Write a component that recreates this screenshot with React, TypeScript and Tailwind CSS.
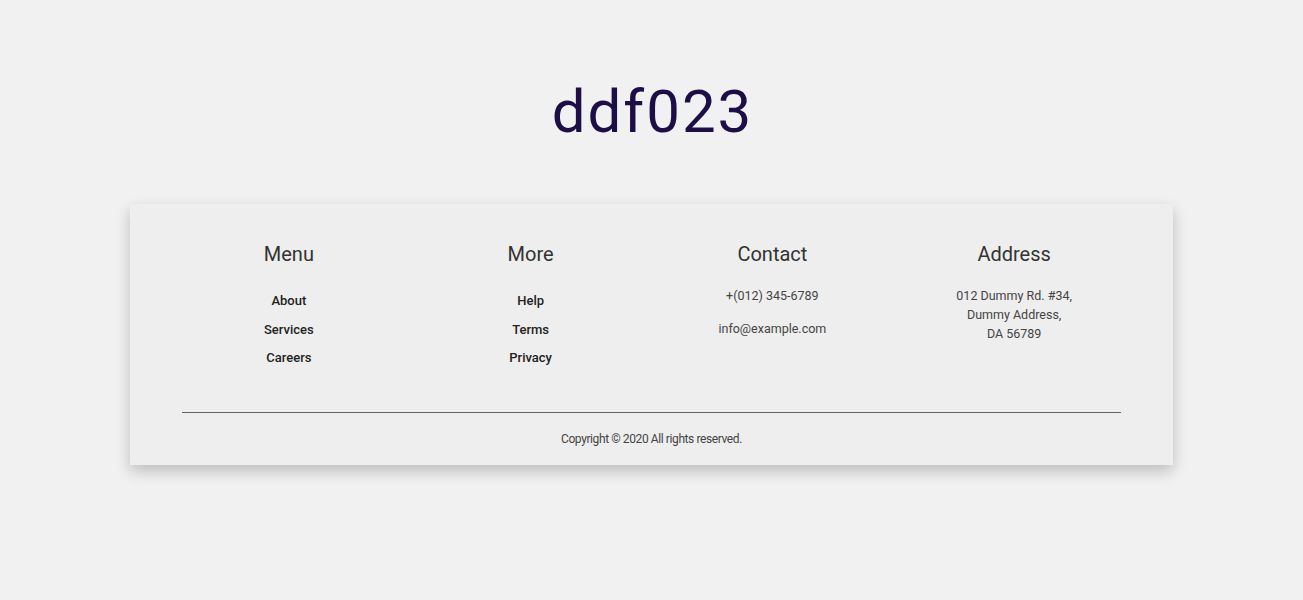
import React from "react";

const columns = [
  { title: "Menu", links: ["About", "Services", "Careers"] },
  { title: "More", links: ["Help", "Terms", "Privacy"] },
];

const App = () => {
  return (
    <div
      className="min-h-[600px] bg-[#f1f1f1] pt-[82px]"
      style={{ fontFamily: "Roboto, 'Noto Sans', sans-serif" }}
    >
      <h1 className="pl-[2px] text-center text-[60px] leading-none font-normal tracking-[2px] text-[#1e0e48]">ddf023</h1>

      <footer className="mx-auto mt-[62px] w-[1043px] bg-[#eeeeee] pt-[38px] pb-[18px] shadow-[0_6px_14px_rgba(0,0,0,0.22)]">
        <div className="grid grid-cols-4 px-[38px] text-center">
          {columns.map((col) => (
            <div key={col.title}>
              <h3 className="text-[20px] leading-6 text-[#333]">{col.title}</h3>
              <ul className="mt-[21px]">
                {col.links.map((l) => (
                  <li key={l} className="text-[13px] leading-[28.5px] font-medium text-[#222]">
                    {l}
                  </li>
                ))}
              </ul>
            </div>
          ))}
          <div>
            <h3 className="text-[20px] leading-6 text-[#333]">Contact</h3>
            <div className="mt-[19.5px] text-[12.5px] leading-[19px] text-[#444]">
              <p>+(012) 345-6789</p>
              <p className="mt-[14px]">info@example.com</p>
            </div>
          </div>
          <div>
            <h3 className="text-[20px] leading-6 text-[#333]">Address</h3>
            <div className="mt-[19.5px] text-[12.5px] leading-[19px] text-[#444]">
              <p>012 Dummy Rd. #34,</p>
              <p>Dummy Address,</p>
              <p>DA 56789</p>
            </div>
          </div>
        </div>

        <hr className="mx-auto mt-[39px] w-[90%] border-0 border-t border-[#666]" />

        <p className="mt-[18px] text-center text-[12px] leading-4 tracking-[-0.4px] text-[#444]">
          Copyright © 2020 All rights reserved.
        </p>
      </footer>
    </div>
  );
};

export default App;
